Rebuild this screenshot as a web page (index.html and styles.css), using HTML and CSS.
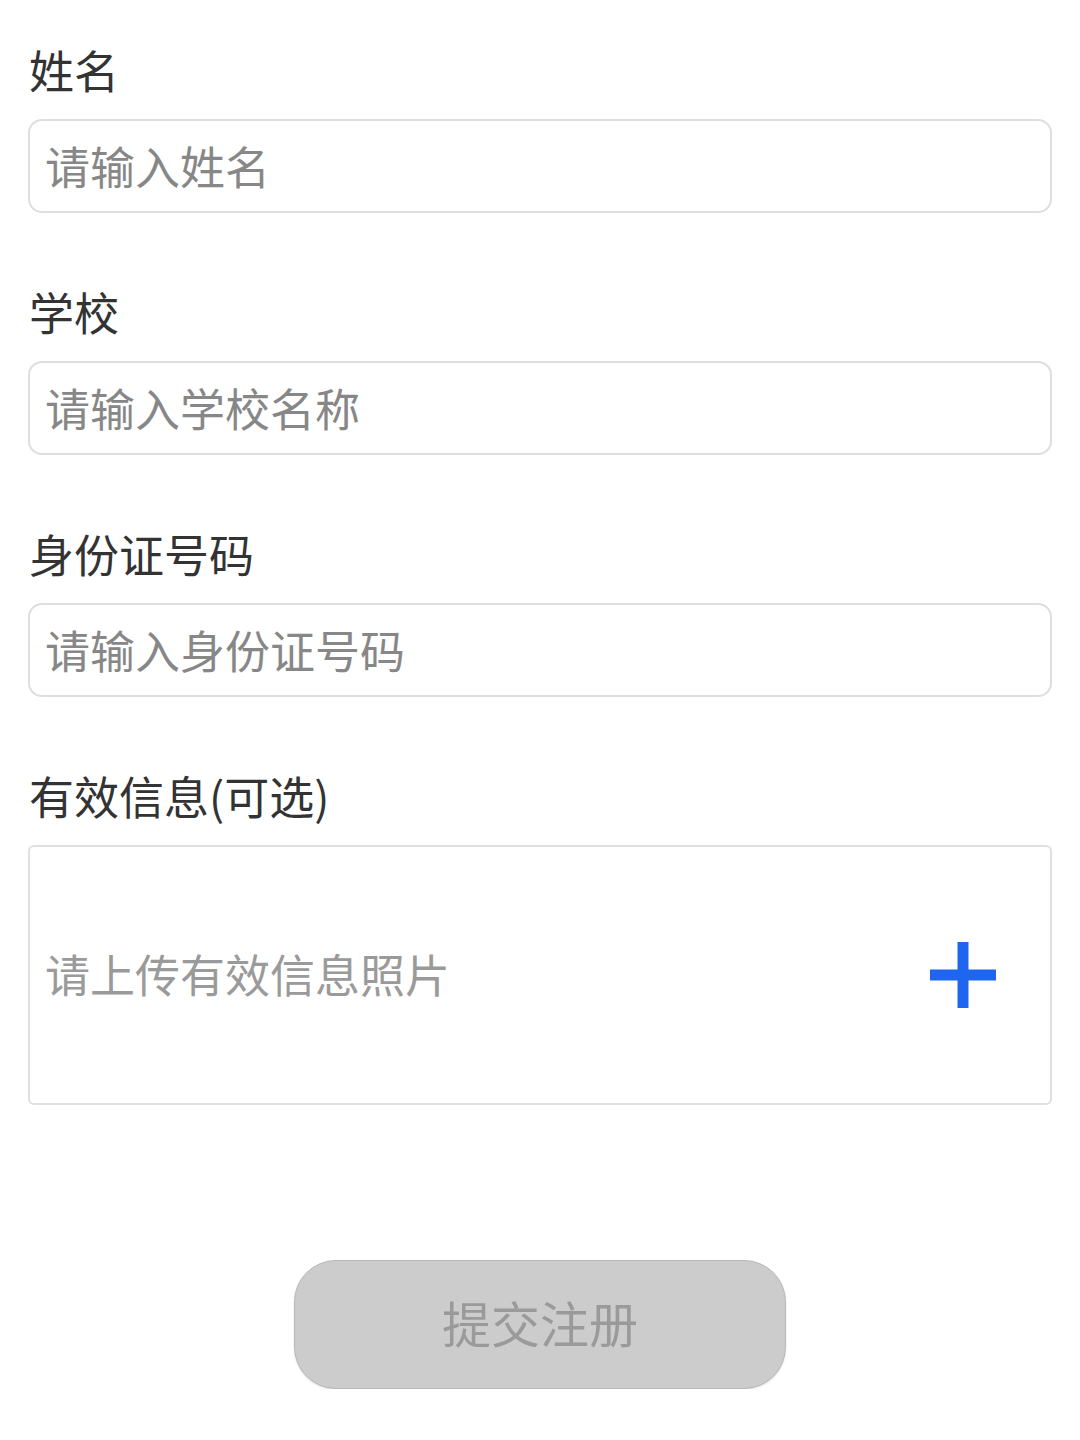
FILE: index.html
```html
<!DOCTYPE html>
<html lang="zh-CN">
<head>
<meta charset="utf-8">
<title>注册</title>
<link rel="stylesheet" href="styles.css">
</head>
<body>
<form class="form">
  <div class="field">
    <div class="label">姓名</div>
    <div class="input"><span class="placeholder">请输入姓名</span></div>
  </div>
  <div class="field">
    <div class="label">学校</div>
    <div class="input"><span class="placeholder">请输入学校名称</span></div>
  </div>
  <div class="field">
    <div class="label">身份证号码</div>
    <div class="input"><span class="placeholder">请输入身份证号码</span></div>
  </div>
  <div class="field">
    <div class="label">有效信息(可选)</div>
    <div class="upload">
      <span class="upload-text">请上传有效信息照片</span>
      <svg class="plus" width="66" height="66" viewBox="0 0 66 66">
        <rect x="0" y="27.5" width="66" height="11" fill="#1e66f0"/>
        <rect x="27.5" y="0" width="11" height="66" fill="#1e66f0"/>
      </svg>
    </div>
  </div>
  <div class="actions">
    <div class="submit">提交注册</div>
  </div>
</form>
</body>
</html>
```

FILE: styles.css
```css
html, body {
  margin: 0;
  padding: 0;
  background: #ffffff;
}
body {
  font-family: "Noto Sans CJK SC", "Noto Sans", sans-serif;
  color: #333333;
}
.form {
  padding: 40px 28px 0 28px;
  display: flex;
  flex-direction: column;
}
.field {
  display: flex;
  flex-direction: column;
  margin-bottom: 69px;
}
.label {
  font-size: 45px;
  line-height: 60px;
  height: 60px;
  padding-left: 1px;
  margin-bottom: 19px;
  color: #333333;
}
.input {
  box-sizing: border-box;
  height: 94px;
  width: 1024px;
  border: 2px solid #dedede;
  border-radius: 14px;
  padding-left: 15px;
  display: flex;
  align-items: center;
}
.placeholder {
  font-size: 45px;
  line-height: 1;
  color: #878787;
  padding-bottom: 2px;
}
.upload {
  box-sizing: border-box;
  height: 260px;
  width: 1024px;
  border: 2px solid #e0e0e0;
  border-radius: 6px;
  padding: 0 54px 0 15px;
  display: flex;
  align-items: center;
  justify-content: space-between;
}
.upload-text {
  font-size: 45px;
  line-height: 1;
  color: #9a9a9a;
  padding-bottom: 4px;
}
.plus {
  display: block;
}
.actions {
  display: flex;
  justify-content: center;
  margin-top: 86px;
}
.submit {
  box-sizing: border-box;
  width: 492px;
  height: 129px;
  border-radius: 42px;
  background: #cccccc;
  border: 1px solid #b8b8b8;
  box-shadow: 0 1px 2px rgba(0,0,0,0.12);
  display: flex;
  align-items: center;
  justify-content: center;
  font-size: 49px;
  line-height: 1;
  padding-bottom: 6px;
  color: #9a9a9a;
}
```
